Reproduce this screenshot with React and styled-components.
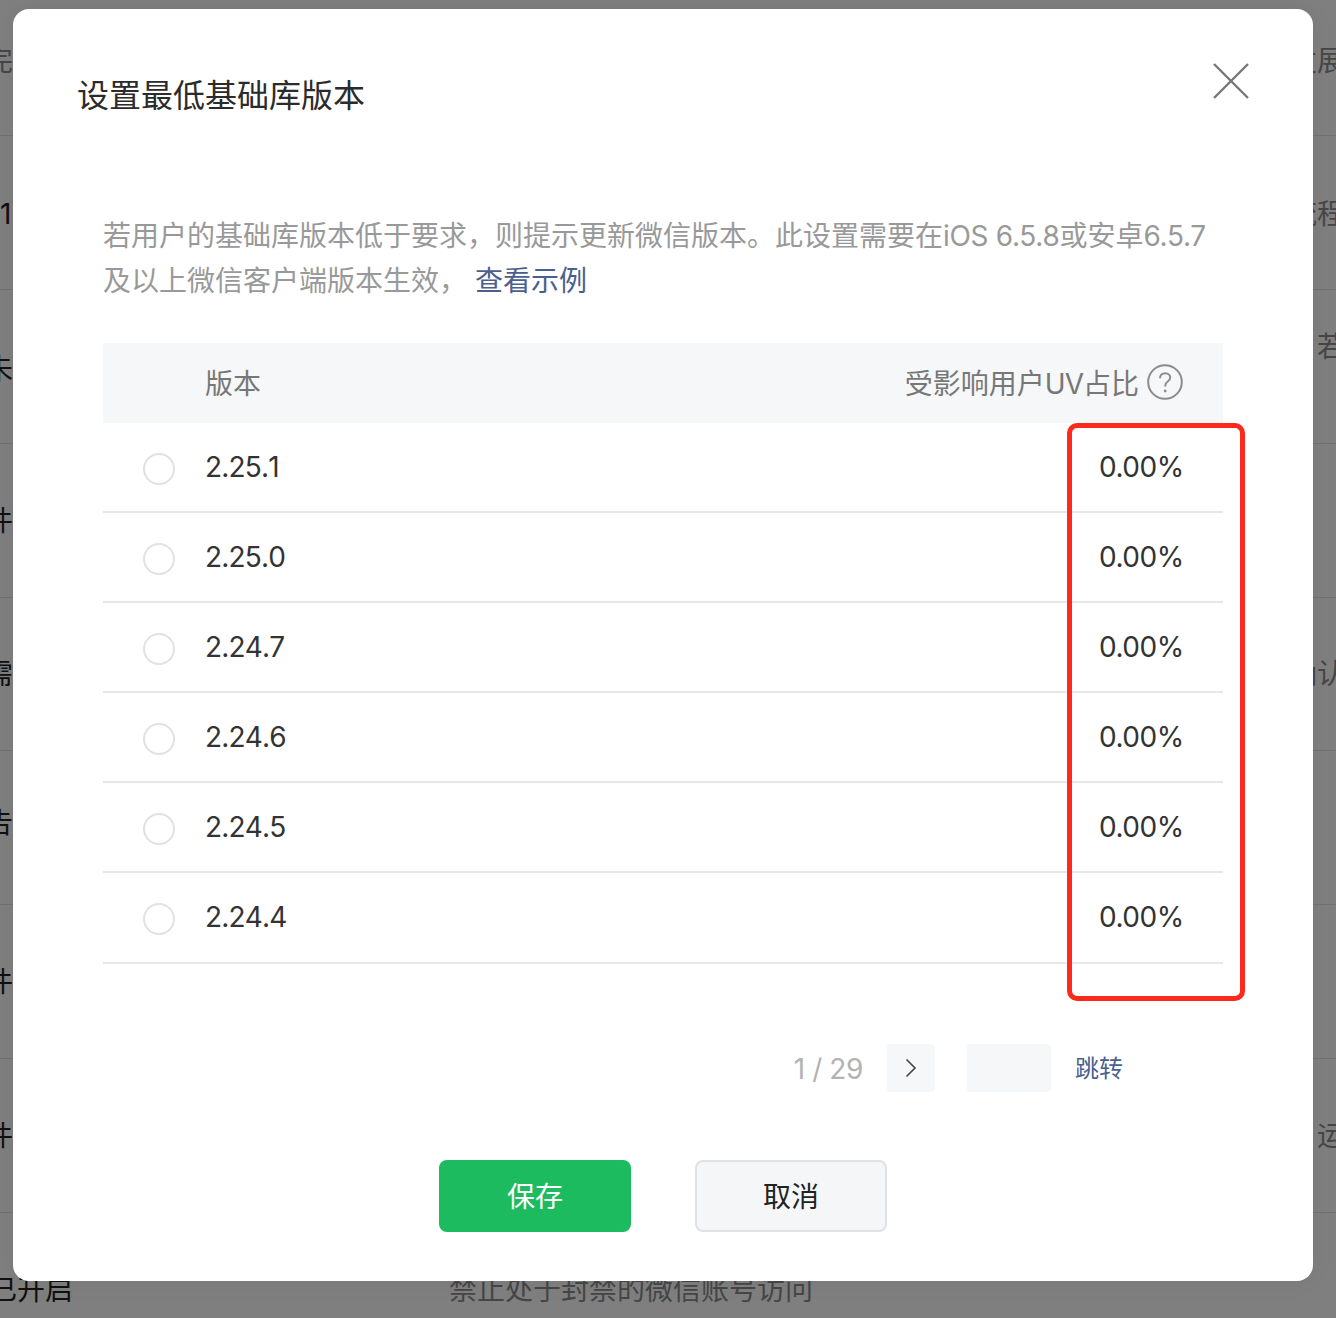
import React from "react";
import styled, { createGlobalStyle } from "styled-components";

const GlobalStyle = createGlobalStyle`
  html, body {
    margin: 0;
    padding: 0;
    background: #fff;
    font-family: "Inter", "Noto Sans CJK SC", sans-serif;
  }
`;

const Page = styled.div`
  position: relative;
  width: 1336px;
  height: 1318px;
  overflow: hidden;
`;

// Settings list behind the dialog, only its edges show
const BackList = styled.div`
  padding-top: 0;
`;

const BackRow = styled.div`
  height: ${p => p.$h}px;
  padding-top: ${p => p.$top || 0}px;
  padding-bottom: ${p => p.$bottom || 0}px;
  border-bottom: 1px solid #e4e4e4;
  box-sizing: border-box;
  display: flex;
  justify-content: space-between;
  align-items: center;
  font-size: 28px;
  line-height: 40px;
  white-space: nowrap;
`;

const BackLeft = styled.span`
  margin-left: ${p => p.$offset ?? -15}px;
  color: ${p => p.$grey ? "#8d8d8d" : "#222"};
`;

const BackRight = styled.span`
  margin-right: -9px;
  margin-bottom: ${p => p.$lift || 0}px;
  color: #8d8d8d;
`;

const LastRow = styled.div`
  display: flex;
  font-size: 28px;
  line-height: 40px;
  color: #222;
  white-space: nowrap;
  padding-top: 57px;
  margin-left: -11px;
`;

const LastHint = styled.span`
  margin-left: 376px;
  color: #8d8d8d;
`;

const Overlay = styled.div`
  position: absolute;
  inset: 0;
  background: rgba(0, 0, 0, 0.5);
`;

const Dialog = styled.div`
  position: absolute;
  left: 13px;
  top: 9px;
  width: 1300px;
  height: 1272px;
  box-sizing: border-box;
  background: #fff;
  border-radius: 16px;
  box-shadow: 0 0 24px rgba(0, 0, 0, 0.06);
  padding: 64px 90px 0;
  color: #1a1a1a;
`;

const Title = styled.h2`
  margin: 0 0 0 -26px;
  font-size: 32px;
  line-height: 45px;
  font-weight: 400;
  color: #2b2b2b;
`;

const CloseIcon = styled.svg`
  position: absolute;
  left: 1200px;
  top: 54px;
  width: 36px;
  height: 36px;
`;

const Desc = styled.p`
  margin: 96px -6px 0 0;
  font-size: 28px;
  line-height: 45px;
  color: #999;
`;

// Latin in the text runs a little tighter than plain Inter
const Latin = styled.span`
  letter-spacing: ${p => p.$tight ? "-1px" : "-0.3px"};
`;

const Link = styled.a`
  margin-left: 8px;
  color: #4a5f8f;
`;

const Table = styled.div`
  margin-top: 39px;
  width: 1120px;
`;

const HeaderRow = styled.div`
  display: flex;
  justify-content: space-between;
  align-items: center;
  height: 80px;
  background: #f6f7f9;
  padding: 0 40px 0 102px;
  font-size: 28px;
  color: #777;
`;

const HeaderLabel = styled.span`
  margin-top: -2px;
`;

const HeaderRight = styled.div`
  display: flex;
  align-items: center;
  gap: 8px;
`;

const HelpIcon = styled.svg`
  width: 36px;
  height: 36px;
  margin-top: -3px;
`;

const Row = styled.div`
  display: flex;
  align-items: center;
  height: 90px;
  box-sizing: border-box;
  border-bottom: 2px solid #e7e7eb;
  padding-left: 40px;
  font-size: 28px;
  color: #333;

  &:last-child {
    height: 91px;
  }
`;

const Radio = styled.span`
  width: 32px;
  height: 32px;
  box-sizing: border-box;
  border: 2px solid #e1e1e3;
  border-radius: 50%;
  margin-right: 30px;
  margin-top: 3px;
`;

const Version = styled.span`
  flex: 1;
  margin-top: -1px;
  letter-spacing: -0.8px;
  font-kerning: none;
`;

const Percent = styled.span`
  width: 124px;
  margin-top: -1px;
  letter-spacing: -0.5px;
`;

const Highlight = styled.div`
  position: absolute;
  left: 1054px;
  top: 414px;
  width: 178px;
  height: 578px;
  box-sizing: border-box;
  border: 5px solid #fb2a1c;
  border-radius: 10px;
`;

const Pager = styled.div`
  display: flex;
  align-items: center;
  justify-content: flex-end;
  margin-top: 80px;
  height: 48px;
  padding-right: 100px;
`;

const PageCount = styled.span`
  font-size: 28px;
  letter-spacing: -0.4px;
  color: #b2b2b2;
  margin-right: 24px;
  margin-top: 1px;
`;

const PageButton = styled.span`
  display: flex;
  align-items: center;
  justify-content: center;
  width: 48px;
  height: 48px;
  background: #f6f7f9;
  border-radius: 4px;
  margin-right: 32px;
`;

const PageInput = styled.span`
  width: 84px;
  height: 48px;
  background: #f6f7f9;
  border-radius: 4px;
  margin-right: 24px;
`;

const Jump = styled.a`
  font-size: 24px;
  margin-top: -3px;
  color: #4a5f8f;
`;

const Actions = styled.div`
  display: flex;
  justify-content: center;
  gap: 64px;
  margin-top: 68px;
`;

const ActionButton = styled.button`
  width: 192px;
  height: 72px;
  box-sizing: border-box;
  border-radius: 8px;
  font: inherit;
  font-size: 28px;
  padding: 0 0 2px;
  border: ${p => p.$primary ? "none" : "2px solid #e0e1e4"};
  background: ${p => p.$primary ? "#1cbb5f" : "#f5f6f8"};
  color: ${p => p.$primary ? "#fff" : "#222"};
`;

const versions = ["2.25.1", "2.25.0", "2.24.7", "2.24.6", "2.24.5", "2.24.4"];

const backRows = [
  { left: "完", right: "发展", grey: true, h: 136, bottom: 14 },
  { left: "1", right: "流程", offset: 0, h: 154, top: 2 },
  { left: "未", right: "若", lift: 44, h: 154, top: 4 },
  { left: "件", h: 154 },
  { left: "需", right: "确认", h: 153 },
  { left: "告", h: 154, bottom: 10 },
  { left: "件", h: 154 },
  { left: "件", right: "运", h: 154 }
];

const App = () => {
  return (
    <Page>
      <GlobalStyle />
      <BackList>
        {backRows.map((row, i) => (
          <BackRow key={i} $h={row.h} $top={row.top} $bottom={row.bottom}>
            <BackLeft $grey={row.grey} $offset={row.offset}>{row.left}</BackLeft>
            {row.right && <BackRight $lift={row.lift}>{row.right}</BackRight>}
          </BackRow>
        ))}
        <LastRow>
          <span>已开启</span>
          <LastHint>禁止处于封禁的微信账号访问</LastHint>
        </LastRow>
      </BackList>
      <Overlay />
      <Dialog>
        <Title>设置最低基础库版本</Title>
        <CloseIcon viewBox="0 0 36 36">
          <path d="M1 1L35 35M35 1L1 35" stroke="#777" strokeWidth="2.4" fill="none" />
        </CloseIcon>
        <Desc>
          若用户的基础库版本低于要求，则提示更新微信版本。此设置需要在<Latin>iOS 6.5.8</Latin>或安卓<Latin>6.5.7</Latin>
          及以上微信客户端版本生效，
          <Link>查看示例</Link>
        </Desc>
        <Table>
          <HeaderRow>
            <HeaderLabel>版本</HeaderLabel>
            <HeaderRight>
              <HeaderLabel>受影响用户<Latin $tight>UV</Latin>占比</HeaderLabel>
              <HelpIcon viewBox="0 0 36 36">
                <circle cx="18" cy="18" r="16.8" stroke="#8c8c8c" strokeWidth="2" fill="none" />
                <path d="M13 14.2c0-3 2.2-5 5.2-5s5 1.900 5 4.400c0 2-1.100 3.100-2.700 4.200-1.500 1-2.200 1.900-2.200 3.800v1" stroke="#8c8c8c" strokeWidth="2" fill="none" />
                <circle cx="18.200" cy="27" r="1.400" fill="#8c8c8c" />
              </HelpIcon>
            </HeaderRight>
          </HeaderRow>
          {versions.map(v => (
            <Row key={v}>
              <Radio />
              <Version>{v}</Version>
              <Percent>0.00%</Percent>
            </Row>
          ))}
        </Table>
        <Highlight />
        <Pager>
          <PageCount>1 / 29</PageCount>
          <PageButton>
            <svg width="12" height="20" viewBox="0 0 12 20">
              <path d="M1.500 1.500L10 10L1.500 18.500" stroke="#444" strokeWidth="1.600" fill="none" />
            </svg>
          </PageButton>
          <PageInput />
          <Jump>跳转</Jump>
        </Pager>
        <Actions>
          <ActionButton $primary>保存</ActionButton>
          <ActionButton>取消</ActionButton>
        </Actions>
      </Dialog>
    </Page>
  );
};

export default App;
